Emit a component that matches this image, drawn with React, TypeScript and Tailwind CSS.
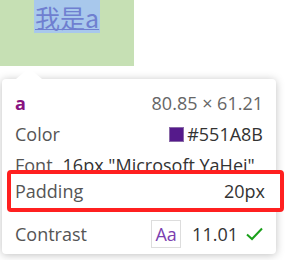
export default function App() {
  return (
    <div className="relative w-[288px] h-[260px] bg-white overflow-hidden" style={{ fontFamily: '"Open Sans", "Noto Sans CJK SC", sans-serif' }}>
      <div className="w-[134px] h-[66px] bg-[#c6e0b4]">
        <div className="ml-[34px] w-fit h-[33px] bg-[#a8c8ec] flex items-end">
          <a className="text-[25px] leading-[31px] text-[#6f7fd0] underline decoration-1 underline-offset-[1px] whitespace-nowrap px-[1px]" style={{ fontFamily: '"Noto Sans CJK SC", sans-serif' }}>我是a</a>
        </div>
      </div>

      <div className="absolute left-[2px] top-[79px] w-[274px] h-[175px] bg-white rounded-[4px] shadow-[0_1px_8px_rgba(0,0,0,0.25)]">
        <div className="absolute left-[14px] -top-[11px] w-0 h-0 border-l-[13px] border-r-[13px] border-b-[11px] border-l-transparent border-r-transparent border-b-white" />
        <div className="flex flex-col pl-[13px] pr-[13px] pt-[10px] text-[18px] text-[#555]">
          <div className="flex justify-between items-center h-[28px]">
            <span className="text-[#881280] font-bold">a</span>
            <span className="text-[#666]">80.85 × 61.21</span>
          </div>
          <div className="flex justify-between items-center h-[32px] mt-[1px]">
            <span>Color</span>
            <span className="flex items-center gap-[3px] text-[#333]">
              <span className="w-[15px] h-[15px] bg-[#551A8B] border border-[#8a6aa8]" />
              #551A8B
            </span>
          </div>
          <div className="flex items-center h-[22px] gap-[10px] mt-[4px]">
            <span>Font</span>
            <span className="text-[#333]">16px "Microsoft YaHei"</span>
          </div>
        </div>
      </div>

      <div className="absolute left-[7px] top-[170px] w-[277px] h-[42px] border-[4px] border-[#ff2020] rounded-[4px] bg-white flex items-center justify-between pl-[4px] pr-[15px] text-[18px]">
        <span className="text-[#555]">Padding</span>
        <span className="text-[#333]">20px</span>
      </div>

      <div className="absolute left-[15px] top-[220px] w-[248px] h-[28px] flex items-center text-[18px]">
        <span className="text-[#555]">Contrast</span>
        <span className="ml-auto w-[30px] h-[28px] border border-[#ddd] flex items-center justify-center text-[#7b3fb0]">Aa</span>
        <span className="ml-[11px] text-[#333]">11.01</span>
        <svg className="ml-[8px]" width="17" height="14" viewBox="0 0 17 14"><path d="M1 7.5 L6 12 L16 1.5" fill="none" stroke="#1aa01a" strokeWidth="2" /></svg>
      </div>
    </div>
  );
}
